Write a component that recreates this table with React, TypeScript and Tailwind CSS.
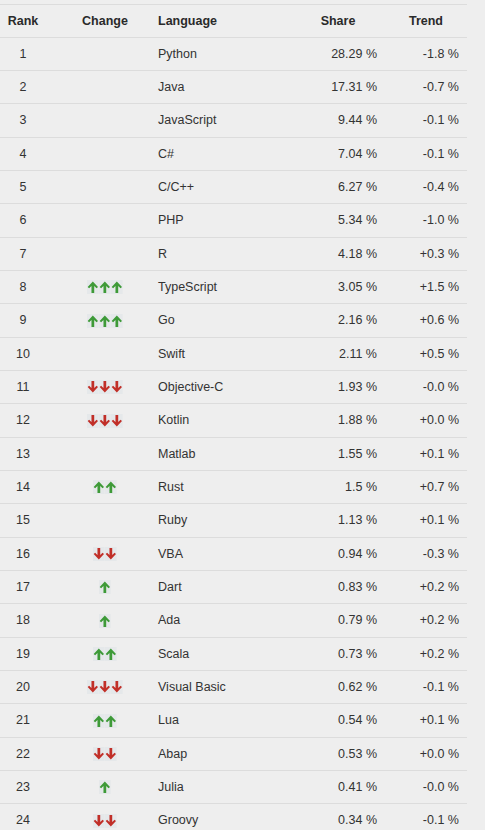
import React from "react";

type Row = [number, number, string, string, string];

const rows: Row[] = [
  [1, 0, "Python", "28.29 %", "-1.8 %"],
  [2, 0, "Java", "17.31 %", "-0.7 %"],
  [3, 0, "JavaScript", "9.44 %", "-0.1 %"],
  [4, 0, "C#", "7.04 %", "-0.1 %"],
  [5, 0, "C/C++", "6.27 %", "-0.4 %"],
  [6, 0, "PHP", "5.34 %", "-1.0 %"],
  [7, 0, "R", "4.18 %", "+0.3 %"],
  [8, 3, "TypeScript", "3.05 %", "+1.5 %"],
  [9, 3, "Go", "2.16 %", "+0.6 %"],
  [10, 0, "Swift", "2.11 %", "+0.5 %"],
  [11, -3, "Objective-C", "1.93 %", "-0.0 %"],
  [12, -3, "Kotlin", "1.88 %", "+0.0 %"],
  [13, 0, "Matlab", "1.55 %", "+0.1 %"],
  [14, 2, "Rust", "1.5 %", "+0.7 %"],
  [15, 0, "Ruby", "1.13 %", "+0.1 %"],
  [16, -2, "VBA", "0.94 %", "-0.3 %"],
  [17, 1, "Dart", "0.83 %", "+0.2 %"],
  [18, 1, "Ada", "0.79 %", "+0.2 %"],
  [19, 2, "Scala", "0.73 %", "+0.2 %"],
  [20, -3, "Visual Basic", "0.62 %", "-0.1 %"],
  [21, 2, "Lua", "0.54 %", "+0.1 %"],
  [22, -2, "Abap", "0.53 %", "+0.0 %"],
  [23, 1, "Julia", "0.41 %", "-0.0 %"],
  [24, -2, "Groovy", "0.34 %", "-0.1 %"],
];

function Arrow({ up }: { up: boolean }) {
  return (
    <svg width="11.7" height="14" viewBox="0 0 12 14" className="block" preserveAspectRatio="none">
      <rect x="0" y="0" width="12" height="14" fill="#e5e8ea" />
      <g transform={up ? "" : "rotate(180 6 7)"}>
        <path
          d="M6 1.5 L11.3 7 L9.8 8.3 L7.4 5.9 L7.4 13 L4.6 13 L4.6 5.9 L2.2 8.3 L0.7 7 Z"
          fill={up ? "#3e9a38" : "#c12f28"}
        />
      </g>
    </svg>
  );
}

function Change({ n }: { n: number }) {
  if (n === 0) return null;
  const up = n > 0;
  const count = Math.abs(n);
  return (
    <div className="flex">
      {Array.from({ length: count }).map((_, i) => (
        <Arrow key={i} up={up} />
      ))}
    </div>
  );
}

const grid = "grid grid-cols-[46px_104px_141px_94px_82px] items-center";

export default function App() {
  return (
    <div
      className="min-h-[830px] w-[485px] bg-[#eeeeee] pt-[4px] text-[12.5px] text-[#333333]"
      style={{ fontFamily: '"Liberation Sans", Arial, sans-serif' }}
    >
      <div className="w-[467px]">
        <div className={`${grid} h-[33.83px] border-y border-[#dcdcdc] font-bold text-[#2a2a2a]`}>
          <div className="text-center">Rank</div>
          <div className="pl-[14px] text-center">Change</div>
          <div className="pl-[8px]">Language</div>
          <div className="text-center">Share</div>
          <div className="text-center">Trend</div>
        </div>
        {rows.map(([rank, ch, lang, share, trend]) => (
          <div key={rank} className={`${grid} h-[33.333px] border-b border-[#dcdcdc]`}>
            <div className="text-center">{rank}</div>
            <div className="flex justify-center pl-[14px]">
              <Change n={ch} />
            </div>
            <div className="pl-[8px]">{lang}</div>
            <div className="pr-[8px] text-right">{share}</div>
            <div className="pr-[8px] text-right">{trend}</div>
          </div>
        ))}
      </div>
    </div>
  );
}
